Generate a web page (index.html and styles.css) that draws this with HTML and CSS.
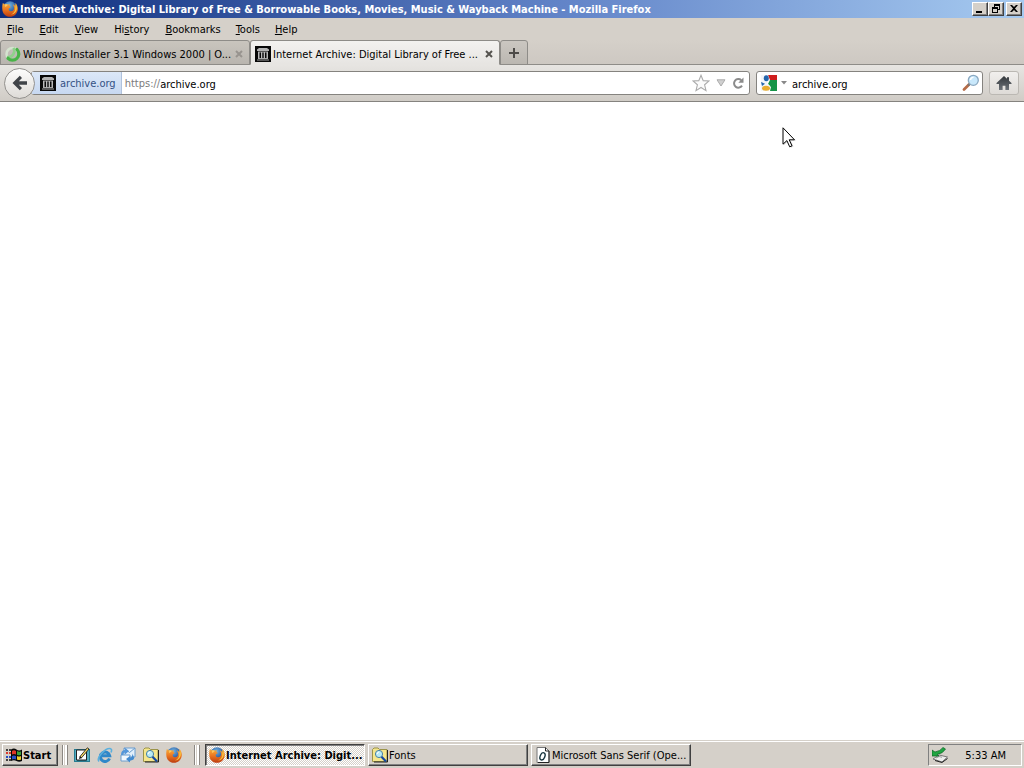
FILE: index.html
```html
<!DOCTYPE html>
<html lang="en">
<head>
<meta charset="utf-8">
<title>Internet Archive - Mozilla Firefox</title>
<link rel="stylesheet" href="styles.css">
</head>
<body>
<svg class="defs" aria-hidden="true">
  <defs>
    <linearGradient id="flame" x1="0" y1="0" x2="0" y2="1"><stop offset="0" stop-color="#f9b03c"/><stop offset=".5" stop-color="#ea7420"/><stop offset="1" stop-color="#bc3d10"/></linearGradient>
    <radialGradient id="globe" cx=".45" cy=".3" r=".7"><stop offset="0" stop-color="#6fb4e6"/><stop offset="1" stop-color="#173a80"/></radialGradient>
    <linearGradient id="house" x1="0" y1="0" x2="0" y2="1"><stop offset="0" stop-color="#33373b"/><stop offset="1" stop-color="#6d7278"/></linearGradient>
    <symbol id="firefox" viewBox="0 0 16 16">
      <circle cx="8" cy="7" r="6.8" fill="url(#globe)"/>
      <path d="M.8 2 2.9 3.6C3.8 3.200 5 3.300 5.800 3.700L7.800 3 7.400 5 8.900 5.900 7 7.300C6.300 8 6.600 9.700 8.600 10.200 11 10.600 12.600 8.600 12.100 6.200L11 3.400C12.200 3.600 13 4.600 13.400 5.400L13.600 2C15.200 3.600 16.100 6.700 15.700 9 15 13.200 11.900 15.800 8 15.800 3.600 15.800.3 12.400.3 8 .1 6 .3 4 .8 2Z" fill="url(#flame)"/>
      <path d="M13.600 3C15 5 15.400 8 14 10.500 12.800 12.600 10.800 13.500 9 13.500 11.600 12.500 13.500 10 13.400 6.500Z" fill="#f8c63e"/>
      <path d="M2.900 3.600C3.800 3.200 5 3.300 5.800 3.700L5 5 3 6Z" fill="#fbc45c"/>
    </symbol>
    <symbol id="archive" viewBox="0 0 16 16">
      <path d="M0 0h16v16H0z" fill="#080808"/>
      <path d="M4 2h8l2 1.500V5H2V3.500Z" fill="#b4b4b4"/>
      <path d="M3 5.500h10v1H3zM3 12h10v1H3zM2 13.500h12v1H2z" fill="#a4a4a4"/>
      <path d="M3 6h1.500v6.500H3zM6 6h1.300v6.500H6zM8.700 6H10v6.500H8.700zM11.500 6H13v6.500h-1.500z" fill="#bababa"/>
    </symbol>
    <symbol id="folderfind" viewBox="0 0 16 16">
      <path d="M.5 2.500 2 1h4l1.500 1.500H15v12H.5Z" fill="#f5e68c" stroke="#9b9349"/>
      <path d="M15.500 3v12H2" fill="none" stroke="#222"/>
      <circle cx="7" cy="7" r="3.600" fill="#b9eaf4" stroke="#4882a5"/>
      <path d="M5.200 7a2 2 0 0 1 2-2" fill="none" stroke="#fff"/>
      <path d="m9.500 9.800 4.600 4.800" stroke="#1749a0" stroke-width="2.200"/>
    </symbol>
  </defs>
</svg>
<div class="screen">
  <header class="titlebar">
    <svg class="icon"><use href="#firefox"/></svg>
    <h1 class="title">Internet Archive: Digital Library of Free &amp; Borrowable Books, Movies, Music &amp; Wayback Machine - Mozilla Firefox</h1>
    <div class="window-buttons">
      <button class="window-button" aria-label="Minimize"><svg viewBox="0 0 12 10"><path d="M2 7h6v2H2z"/></svg></button>
      <button class="window-button" aria-label="Restore"><svg viewBox="0 0 12 10"><path fill-rule="evenodd" d="M4 0h6v6H8v3H2V3h2zM5 2v1h3v2h1V2zM3 5v3h4V5z"/></svg></button>
      <button class="window-button close" aria-label="Close"><svg viewBox="0 0 12 10"><path d="M2 1h2l2 2 2-2h2L7 4.500 10 8H8L6 6 4 8H2l3-3.500z"/></svg></button>
    </div>
  </header>
  <nav class="menubar" aria-label="Menu">
    <button><u>F</u>ile</button>
    <button><u>E</u>dit</button>
    <button><u>V</u>iew</button>
    <button>Hi<u>s</u>tory</button>
    <button><u>B</u>ookmarks</button>
    <button><u>T</u>ools</button>
    <button><u>H</u>elp</button>
  </nav>
  <div class="tabs">
    <div class="tab">
      <svg class="icon" viewBox="0 0 16 16"><circle cx="7.500" cy="8" r="6" fill="none" stroke="#d5e3cf" stroke-width="2.500"/><path d="M8.500 1.800A6.200 6.200 0 0 1 2 11" fill="none" stroke="#8fd28b" stroke-width="2.600"/><path d="M12 3.500A6.200 6.200 0 0 1 3 12.300" fill="none" stroke="#48b348" stroke-width="3.200" stroke-linecap="round"/></svg>
      <button class="tab-label">Windows Installer 3.1 Windows 2000 | O...</button>
      <button class="tab-close" aria-label="Close tab"><svg viewBox="0 0 8 8"><path d="m1 1 6 6M7 1 1 7"/></svg></button>
    </div>
    <div class="tab active">
      <svg class="icon"><use href="#archive"/></svg>
      <button class="tab-label">Internet Archive: Digital Library of Free ...</button>
      <button class="tab-close" aria-label="Close tab"><svg viewBox="0 0 8 8"><path d="m1 1 6 6M7 1 1 7"/></svg></button>
    </div>
    <button class="new-tab" aria-label="New tab"><svg viewBox="0 0 12 12"><path d="M6 1v10M1 6h10"/></svg></button>
  </div>
  <div class="navbar">
    <button class="back" aria-label="Back"><svg viewBox="0 0 18 16"><path d="M8.800.8 1.500 8l7.300 7.200 2.200-2.300L7.800 9.800H16V6.200H7.800L11 3.100Z" fill="#404448"/></svg></button>
    <div class="address">
      <button class="identity"><svg class="icon"><use href="#archive"/></svg><span class="label">archive.org</span></button>
      <label class="scheme label" for="url">https://</label>
      <input id="url" class="field" type="text" value="archive.org">
      <button class="tool" aria-label="Bookmark"><svg class="star" viewBox="0 0 18 18"><path d="m9 1.300 2.200 5.300 5.800.4-4.400 3.800 1.400 5.800L9 13.500 4 16.600l1.400-5.800L1 7l5.800-.4z" fill="#fbfbfb" stroke="#ababab" stroke-width="1.100"/></svg></button>
      <button class="tool" aria-label="History"><svg class="drop" viewBox="0 0 10 8"><path d="M1 .8h8L5 7z" fill="#d0d0d0" stroke="#ababab"/></svg></button>
      <button class="tool" aria-label="Reload"><svg class="reload" viewBox="0 0 12 12"><path d="M9.300 3.200A4.300 4.300 0 1 0 10 8.600" fill="none" stroke="#8b8b8b" stroke-width="2"/><path d="M11.500.5v5.200H6.300L8.500 3.600z" fill="#8b8b8b"/></svg></button>
    </div>
    <div class="search">
      <button class="engine" aria-label="Search engine"><svg class="icon" viewBox="0 0 16 16"><path d="M7 0h9v5H9z" fill="#cf1d1d"/><path d="M9 5h7v11H9l1-4-3-3z" fill="#159447"/><path d="M0 0h7l1 5-2 3 3 3-1 5H0z" fill="#f3f6fa"/><ellipse cx="5.300" cy="3.300" rx="2.500" ry="3" fill="#2465ab"/><path d="M0 7 4 8.800 1 11z" fill="#2465ab"/><ellipse cx="5" cy="13.300" rx="4" ry="2.500" fill="#eaae30"/></svg><svg class="caret" viewBox="0 0 6 4"><path d="M0 0h6L3 3.500z" fill="#888"/></svg></button>
      <input class="field" type="text" value="archive.org" aria-label="Search">
      <button class="tool" aria-label="Search"><svg class="lens" viewBox="0 0 18 18"><path d="m2 15.500 5-5" stroke="#b66b48" stroke-width="2.800" stroke-linecap="round"/><path d="m6 11.600 1.900-2" stroke="#777" stroke-width="2"/><circle cx="11.300" cy="6.300" r="5" fill="#c9e8fb" stroke="#8aa8c0" stroke-width="1.300"/><path d="M8.500 6a3 3 0 0 1 3-2.600" fill="none" stroke="#fff" stroke-width="1.400"/></svg></button>
    </div>
    <button class="home" aria-label="Home"><svg class="icon" viewBox="0 0 16 16"><path d="M8 1 .5 8v1H3v6h3.600v-4.300h2.800V15H13V9h2.500V8L13 5.700V2.300h-2v1.500Z" fill="url(#house)"/></svg></button>
  </div>
  <main class="page">
    <svg class="pointer" viewBox="0 0 14 22"><path d="M2 2v16l4-3.500 3 6.300 2.500-1.200-2.800-6H14z" fill="#bbb" opacity=".6"/><path d="M1 .8v16.400l3.900-3.600 2.800 6.200 2.300-1-2.800-6h5.300z" fill="#fff" stroke="#000"/></svg>
  </main>
  <footer class="taskbar">
    <button class="start"><svg class="icon" viewBox="0 0 16 16"><path d="M5 2.500q3-2 5.500 0t5.500 0V14q-3 1.500-5.500 0T5 14Z" fill="#080808"/><path d="M6 4q2-1.500 4 0v3.500q-2-1-4 0z" fill="#df3627"/><path d="M11 4q2 1.300 4 .2v3.500q-2 1-4 0z" fill="#37a43c"/><path d="M6 9q2-1.200 4 0v3.600q-2-1-4 0z" fill="#284ec5"/><path d="M11 9q2 1 4 0v3.600q-2 1-4 0z" fill="#f0ce2d"/><path d="M0 3h2M3 3h2M0 13h2M3 13h2" stroke="#111" stroke-width="1.500"/><path d="M0 6h2M3 6h2" stroke="#d93a2d" stroke-width="2"/><path d="M0 10h2M3 10h2" stroke="#284ec5" stroke-width="2"/></svg><span class="label">Start</span></button>
    <span class="grip"></span>
    <div class="quick">
      <button aria-label="Show Desktop"><svg class="icon" viewBox="0 0 16 16"><path d="M0 2h16v13H0z" fill="#267c91"/><path d="M1 3h2v11H1zM13 3h2v11h-2z" fill="#54adc2"/><path d="M2.500 3h10v10h-10z" fill="#fff" stroke="#222"/><path d="m6 9.500 1.500 1.300L15 2 13.300.8z" fill="#f3d464" stroke="#111" stroke-width=".8"/><path d="m5 12 .8-3L8 11z" fill="#111"/></svg></button>
      <button aria-label="Internet Explorer"><svg class="icon" viewBox="0 0 16 16"><path d="M12.500 11.500A4.700 4.700 0 1 1 12.700 8.800H5" fill="none" stroke="#2f88c9" stroke-width="3"/><path d="M2 14.500C-1 11 8 1 13 1.500q2.500.5 1 4" fill="none" stroke="#5bb0de" stroke-width="1.600"/></svg></button>
      <button aria-label="Outlook Express"><svg class="icon" viewBox="0 0 16 16"><path d="M4 1h11v9H4z" fill="#e2effb" stroke="#6b9dce"/><path d="m4 1 5.500 4.500L15 1" fill="none" stroke="#6b9dce"/><path d="M1 8h9v6H1z" fill="#f1f7fd" stroke="#6b9dce"/><path d="M12 6.500q5 7-2 7V15.500L6 12l4-3v1.700q3 0 2-4.200z" fill="#438bd0"/><path d="M1 8q0-5 4-5V1l4 3-4 3.500V5.500Q3 5.500 3 8z" fill="#5597da"/></svg></button>
      <button aria-label="Explorer"><svg class="icon"><use href="#folderfind"/></svg></button>
      <button aria-label="Firefox"><svg class="icon"><use href="#firefox"/></svg></button>
    </div>
    <span class="grip"></span>
    <div class="tasks">
      <button class="task current"><svg class="icon"><use href="#firefox"/></svg><span class="label">Internet Archive: Digit...</span></button>
      <button class="task"><svg class="icon"><use href="#folderfind"/></svg><span class="label">Fonts</span></button>
      <button class="task"><svg class="icon" viewBox="0 0 16 16"><path d="M2 .5h8.500L14 4v11.500H2z" fill="#fff" stroke="#777"/><path d="M10.500.5V4H14v11.500H3" fill="none" stroke="#222"/><ellipse cx="7.500" cy="9.300" rx="2.300" ry="3.800" transform="rotate(22 7.500 9.300)" fill="none" stroke="#17343e" stroke-width="1.400"/></svg><span class="label">Microsoft Sans Serif (Ope...</span></button>
    </div>
    <div class="tray">
      <svg class="icon" viewBox="0 0 16 16"><path d="m1 12 6-4 8.500 2L10 15z" fill="#ededed" stroke="#777"/><path d="M3 13.500 10 15.500l5.500-4" fill="none" stroke="#222"/><path d="m4 11 3-1.500 3 .8" fill="none" stroke="#999"/><path d="M0 3v6h7L5 7.500Q11 6.500 13.500 2L11 .5Q8.500 4 3 5z" fill="#20a642" stroke="#0d6326" stroke-width=".7"/></svg>
      <time class="label">5:33 AM</time>
    </div>
  </footer>
</div>
</body>
</html>
```

FILE: styles.css
```css
* { box-sizing: border-box; }

body {
  margin: 0;
  font: 11px/14px Tahoma, "DejaVu Sans Condensed", "DejaVu Sans", sans-serif;
  color: #000;
}

button,
input {
  margin: 0;
  padding: 0;
  border: 0;
  background: none;
  font: inherit;
  color: inherit;
  white-space: nowrap;
}

input { outline: none; min-width: 0; }
svg { display: block; flex: none; }
.defs { position: absolute; width: 0; height: 0; }
.icon { width: 16px; height: 16px; }
.label, .field { padding-top: 2px; }

.screen {
  display: flex;
  flex-direction: column;
  min-height: 100vh;
  background: #d5d0c9;
}

.titlebar {
  display: flex;
  align-items: center;
  gap: 2px;
  height: 18px;
  padding: 0 2px;
  background: linear-gradient(90deg, #0d2c7c, #6284c8 55%, #a6caf0);
}

.title {
  flex: 1;
  min-width: 0;
  margin: 0;
  padding-top: 2px;
  overflow: hidden;
  font-size: 11px;
  line-height: 14px;
  font-weight: bold;
  white-space: nowrap;
  color: #fff;
}

.window-buttons { display: flex; }

.window-button {
  width: 16px;
  height: 14px;
  padding: 1px;
  background: #d5d0c9;
  border: 1px solid;
  border-color: #fff #404040 #404040 #fff;
  box-shadow: inset -1px -1px #808080;
}

.window-button svg { width: 12px; height: 10px; }
.window-button.close { margin-left: 2px; }

.menubar {
  display: flex;
  align-items: center;
  gap: 15px;
  height: 22px;
  padding: 2px 7px 0;
}

.menubar button { padding: 0 1px 0 0; }
.menubar button:nth-child(n + 5) { padding: 0; }
.menubar u { text-underline-offset: 1px; }

.tabs {
  display: flex;
  height: 25px;
  background: linear-gradient(#d5d0c9, #cdc8c2);
  box-shadow: inset 0 -1px #8e8c88;
}

.tab {
  display: flex;
  align-items: center;
  flex: 0 1 250px;
  min-width: 0;
  gap: 2px;
  padding: 2px 6px 0 4px;
  background: linear-gradient(#c9c5be, #b9b5af);
  border: 1px solid #8e8c88;
  border-radius: 3px 3px 0 0;
}

.tab.active {
  background: linear-gradient(#f3f2f0, #e7e5e2);
  border-bottom-color: #e7e5e2;
}

.tab-label { flex: 1; min-width: 0; padding-top: 2px; overflow: hidden; text-align: left; }
.tab-close svg { width: 8px; height: 8px; fill: none; stroke: #98948f; stroke-width: 2; }
.active .tab-close svg { stroke: #55534f; }

.new-tab {
  display: grid;
  place-items: center;
  width: 28px;
  background: linear-gradient(#cbc7c1, #bbb7b1);
  border: 1px solid #8e8c88;
  border-radius: 3px 3px 0 0;
}

.new-tab svg { width: 12px; height: 12px; stroke: #4d4b48; stroke-width: 2; }

.navbar {
  display: flex;
  align-items: center;
  height: 37px;
  padding: 0 5px 0 4px;
  background: linear-gradient(#e7e5e2, #d0ccc6);
  border-bottom: 1px solid #85837f;
}

.back {
  display: grid;
  place-items: center;
  z-index: 1;
  flex: none;
  width: 31px;
  height: 31px;
  background: linear-gradient(#fdfdfc, #dedbd7);
  border: 1px solid #94928f;
  border-radius: 50%;
}

.back svg { width: 18px; height: 16px; }

.address,
.search {
  display: flex;
  align-items: center;
  height: 24px;
  background: #fff;
  border: 1px solid #85837f;
  border-radius: 3px;
}

.address { flex: 1 1 0; min-width: 0; gap: 6px; margin-left: -4px; padding-right: 5px; }

.identity {
  display: flex;
  align-items: center;
  gap: 4px;
  height: 22px;
  padding: 0 5px 0 8px;
  background: linear-gradient(#dce8f8, #c7d8f1);
  border-right: 1px solid #b0c2dc;
  color: #345184;
}

.scheme { margin-left: -3px; color: #7c7c7c; }
.field { flex: 1; height: 20px; }
.scheme + .field { margin-left: -6px; }
.star { width: 18px; height: 18px; }
.drop { width: 10px; height: 8px; }
.reload { width: 12px; height: 12px; }

.search { flex: 0 1 227px; min-width: 0; margin: 0 6px; padding: 0 2px 0 4px; }
.engine { display: flex; align-items: center; gap: 4px; margin-right: 5px; }
.caret { width: 6px; height: 4px; }
.lens { width: 18px; height: 18px; }

.home {
  display: grid;
  place-items: center;
  flex: none;
  width: 30px;
  height: 24px;
  background: linear-gradient(#f1efed, #dedbd7);
  border: 1px solid #bbb8b3;
  border-radius: 3px;
}

.page { position: relative; flex: 1; background: #fff; }
.pointer { position: absolute; left: 782px; top: 25px; width: 14px; height: 22px; }

.taskbar {
  display: flex;
  align-items: center;
  height: 28px;
  padding: 2px 2px 1px;
  background: #d5d0c9;
  border-top: 1px solid #d5d0c9;
  box-shadow: inset 0 1px #fff;
}

.start,
.task {
  display: flex;
  align-items: center;
  height: 22px;
  border: 1px solid;
  border-color: #fff #404040 #404040 #fff;
  box-shadow: inset -1px -1px #808080;
}

.start { gap: 1px; width: 56px; padding: 0 3px; font-weight: bold; }

.grip {
  width: 6px;
  height: 20px;
  margin: 0 0 0 4px;
  border: solid;
  border-width: 0 1px;
  border-color: #8b8782;
  box-shadow: inset 1px 0 #fff, inset -2px 0 #fff;
}

.quick { display: flex; gap: 7px; margin: 0 8px 0 6px; }
.tasks { display: flex; flex: 1; min-width: 0; gap: 3px; margin-left: 5px; }

.task { flex: 0 1 160px; min-width: 0; gap: 1px; padding: 0 3px; overflow: hidden; }

.task.current {
  font-weight: bold;
  background: repeating-conic-gradient(#fff 0 25%, #d5d0c9 0 50%) 0 0 / 2px 2px;
  border-color: #404040 #fff #fff #404040;
  box-shadow: inset 1px 1px #808080;
}

.tray {
  display: flex;
  align-items: center;
  justify-content: space-between;
  gap: 16px;
  width: 94px;
  height: 22px;
  padding: 0 15px 0 3px;
  border: 1px solid;
  border-color: #808080 #fff #fff #808080;
}
```
